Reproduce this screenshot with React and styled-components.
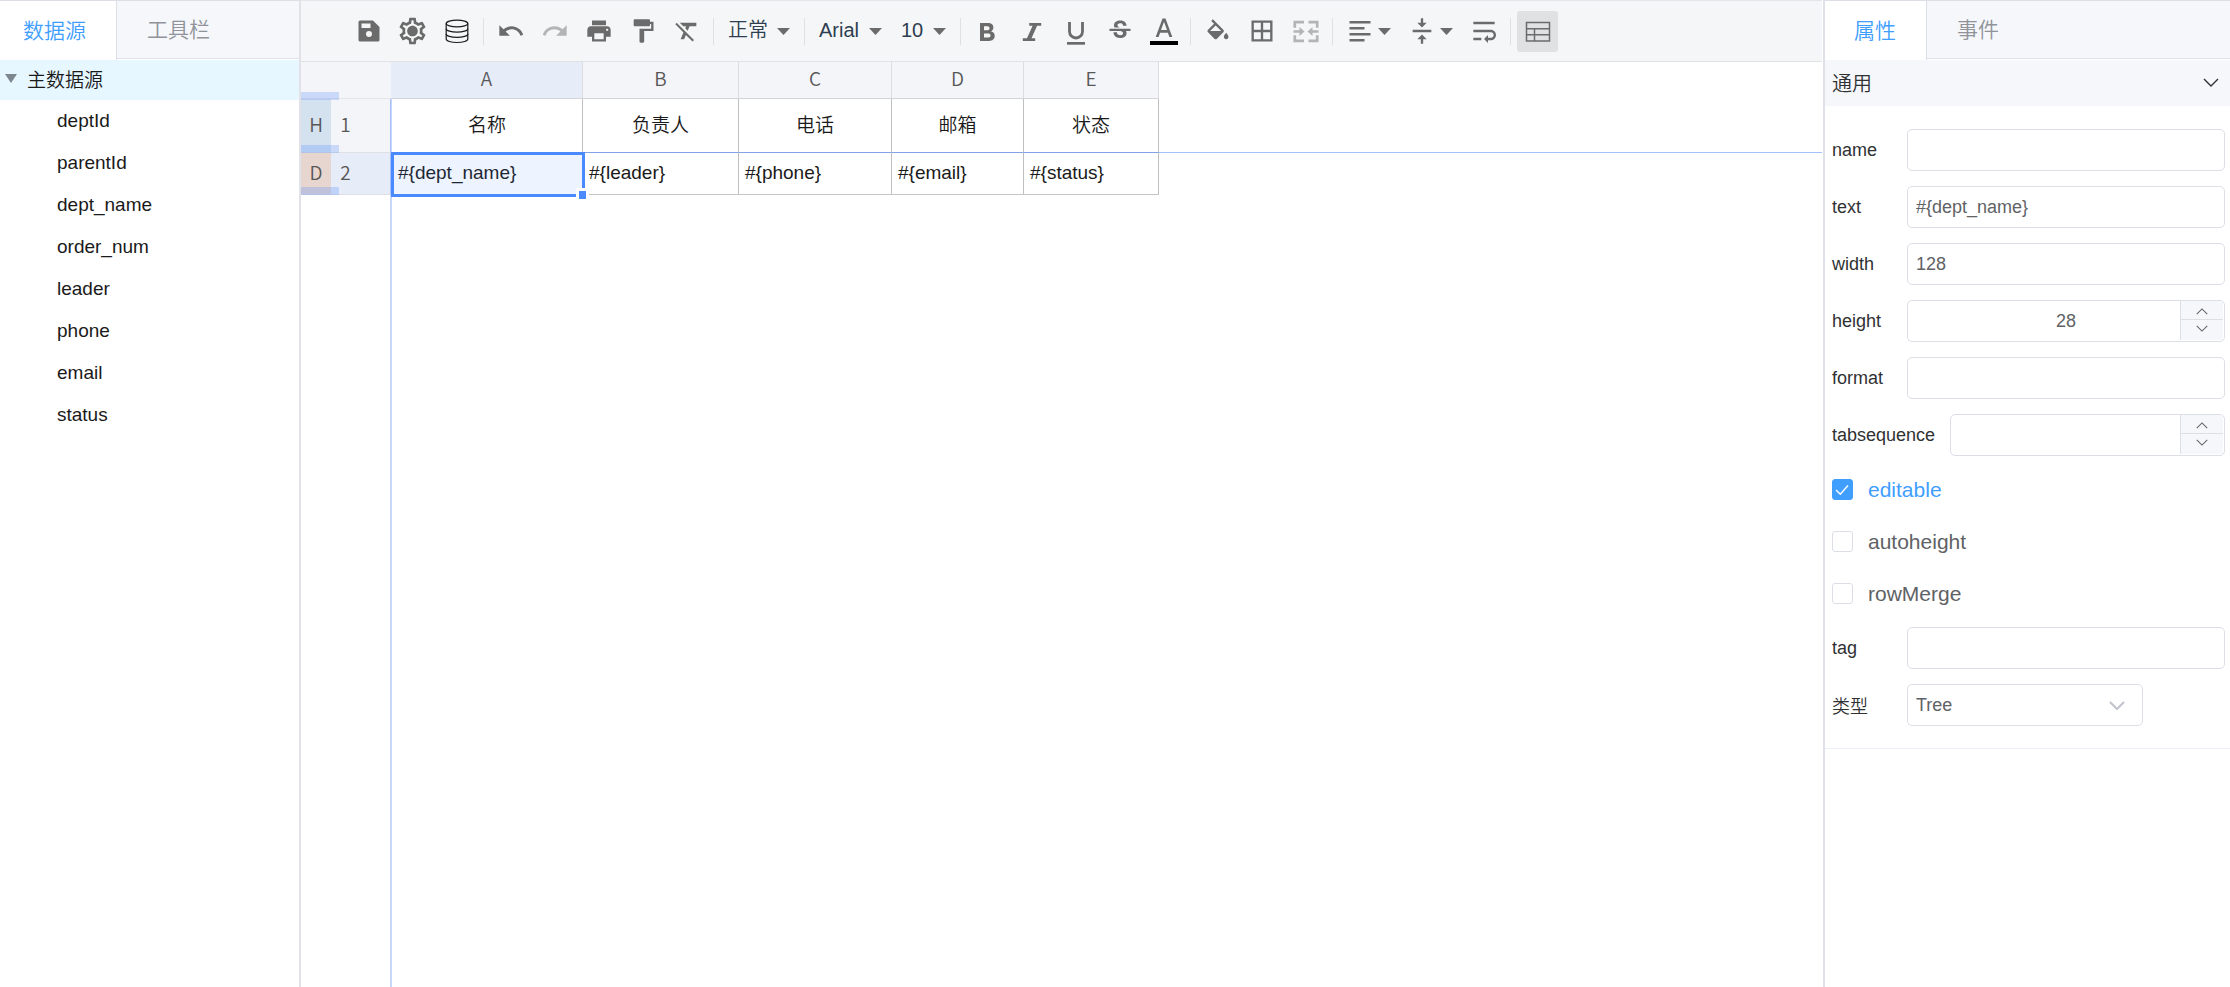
import { useState } from 'react';
import styled, { createGlobalStyle, css } from 'styled-components';
import {
  MdUndo,
  MdRedo,
  MdPrint,
  MdFormatPaint,
  MdFormatClear,
  MdOutlineSettings,
  MdStrikethroughS,
  MdBorderAll,
  MdVerticalAlignCenter,
  MdWrapText,
} from 'react-icons/md';

const FONT = '"Liberation Sans", Arial, "Noto Sans CJK SC", sans-serif';
const HEAD_FONT = '"Noto Sans CJK SC", "Noto Sans", sans-serif';

const GlobalStyle = createGlobalStyle`
  *, *::after {
    box-sizing: border-box;
  }
  body {
    margin: 0;
    background: #fff;
    font-family: ${FONT};
    font-weight: 350;
    font-size: 18px;
    color: #303133;
  }
  button, input, select {
    font: inherit;
    color: inherit;
  }
`;

const Page = styled.div`
  display: flex;
  min-height: 100vh;
`;

/* ---------- side panels ---------- */

const LeftPanel = styled.aside`
  flex: none;
  width: 299px;
`;

const RightPanel = styled.aside`
  flex: none;
  width: 407px;
  border-left: 2px solid #dfe1e8;
`;

const TabBar = styled.div`
  display: flex;
  height: 59px;
  margin-bottom: 1px;
  border-top: 1px solid #dcdfe6;
  border-bottom: 1px solid #dfe2e8;
  background: #f5f7fa;
`;

const Tab = styled.button`
  height: 57px;
  padding: 0 30px;
  padding-left: ${(p) => p.$left || 30}px;
  border: none;
  background: none;
  font-size: 21px;
  line-height: 57px;
  color: #909399;
  ${(p) =>
    p.$active &&
    css`
      height: 59px;
      background: #fff;
      border-right: 1px solid #dcdfe6;
      color: #409eff;
    `}
`;

const Tree = styled.ul`
  margin: 0;
  padding: 0;
  list-style: none;
  font-size: 19px;
  color: #1a1a1a;
`;

const TreeRoot = styled.div`
  display: flex;
  align-items: center;
  gap: 10px;
  height: 40px;
  padding: 0 0 4px 5px;
  background: #e6f7ff;
`;

const TreeItem = styled.li`
  padding-left: 57px;
  line-height: 42px;
`;

/* ---------- toolbar ---------- */

const Editor = styled.main`
  flex: 1;
  min-width: 0;
  display: flex;
  flex-direction: column;
  border-left: 2px solid #e0e2e8;
  padding-right: 1px;
`;

const Toolbar = styled.div`
  display: flex;
  align-items: center;
  gap: 3px;
  height: 62px;
  padding-left: 47px;
  border-top: 1px solid #e4e5e8;
  border-bottom: 1px solid #e0e2e4;
  background: #f5f6f7;
`;

const ToolButton = styled.button`
  display: flex;
  align-items: center;
  justify-content: center;
  flex: none;
  width: ${(p) => (p.$menu ? 59 : 41)}px;
  height: 41px;
  padding: 0;
  gap: 4px;
  border: none;
  border-radius: 3px;
  background: ${(p) => (p.$active ? '#e0e1e3' : 'none')};
  color: #6b6b6b;
  &:disabled {
    color: #b3b4b5;
  }
`;

const Divider = styled.span`
  flex: none;
  width: 1px;
  height: 27px;
  margin: 0 3px;
  background: #dfe0e2;
`;

const ToolSelectWrap = styled.div`
  position: relative;
  flex: none;
  width: ${(p) => p.$width}px;
  color: #6b6b6b;
`;

const ToolSelect = styled.select`
  appearance: none;
  width: 100%;
  height: 41px;
  padding: 0 0 2px 8px;
  border: none;
  background: none;
  font-size: 20px;
  color: #2c3e50;
`;

const ToolSelectCaret = styled.span`
  position: absolute;
  right: 8px;
  top: 0;
  height: 41px;
  display: flex;
  align-items: center;
  pointer-events: none;
`;

/* ---------- sheet ---------- */

const Sheet = styled.table`
  width: 100%;
  table-layout: fixed;
  border-collapse: separate;
  border-spacing: 0;
  font-size: 19px;
  color: #1a1a1a;
  td, th {
    padding: 0;
    font-weight: 350;
  }
`;

const HeadCell = styled.th`
  && {
    padding-bottom: 6px;
  }
  height: 37px;
  border-bottom: 1px solid #d3d4d8;
  border-right: 1px solid #dcdde1;
  background: ${(p) => (p.$active ? '#e6ecf8' : '#f4f5f8')};
  font-family: ${HEAD_FONT};
  color: #585757;
`;

const Corner = styled.th`
  background: #f4f5f8;
  border-bottom: 1px solid #e4e5e8;
`;

const RowBand = styled.th`
  && {
    padding-bottom: 4px;
  }
  position: relative;
  height: ${(p) => p.$height}px;
  border-bottom: 1px solid #d9d5dc;
  background: ${(p) => (p.$band === 'H' ? '#d4e2ef' : '#e7d6d0')};
  font-family: ${HEAD_FONT};
  color: #585757;
`;

const Resizer = styled.i`
  position: absolute;
  z-index: 1;
  left: 0;
  ${(p) => (p.$top ? 'top: -7px' : 'bottom: -1px')};
  width: 38px;
  height: 8px;
  background: rgba(75, 137, 255, 0.25);
`;

const RowNumber = styled.th`
  && {
    padding: 0 30px 4px 0;
  }
  border-bottom: 1px solid #dfe0e4;
  border-right: 1px solid #a6c1f7;
  background: ${(p) => (p.$active ? '#e6ecf8' : '#f4f5f8')};
  font-family: ${HEAD_FONT};
  color: #585757;
`;

const bodyCell = css`
  border-right: 1px solid #bfbfbf;
  /* second half of the freeze line */
  &:nth-child(3) {
    border-left: 1px solid #c5d8fc;
  }
`;

const TitleCell = styled.td`
  && {
    padding-bottom: 4px;
  }
  text-align: center;
  border-bottom: 1px solid #81a3e6;
  ${bodyCell}
`;

const DataCell = styled.td`
  position: relative;
  && {
    padding: 0 0 2px 6px;
  }
  border-bottom: 1px solid #c4c4c4;
  ${bodyCell}
`;

const FreezeTail = styled.td`
  border-bottom: 1px solid #a3c0fb;
`;

const Selection = styled.div`
  position: absolute;
  z-index: 1;
  top: -1px;
  left: -1px;
  right: -3px;
  bottom: -3px;
  border: 3px solid #4b89ff;
  background: rgba(75, 137, 255, 0.1);
  &::after {
    content: '';
    position: absolute;
    right: -7px;
    bottom: -8px;
    width: 13px;
    height: 14px;
    border: 3px solid #fff;
    background: #4b89ff;
  }
`;

const SheetRest = styled.div`
  flex: 1;
  margin-left: 89px;
  border-left: 2px solid #c5d8fc;
`;

/* ---------- properties ---------- */

const SectionHead = styled.button`
  display: flex;
  align-items: center;
  justify-content: space-between;
  width: 100%;
  height: 46px;
  padding: 0 11px 1px 7px;
  border: none;
  background: #f5f7fa;
  font-size: 20px;
  color: #303133;
`;

const Form = styled.form`
  display: flex;
  flex-direction: column;
  gap: 15px;
  padding: 23px 5px 22px 7px;
  border-bottom: 1px solid #ebeef5;
`;

const Field = styled.div`
  display: flex;
  align-items: center;
  gap: 15px;
  height: 42px;
`;

const FieldLabel = styled.label`
  flex: none;
  min-width: 60px;
`;

const Control = styled.div`
  position: relative;
  flex: ${(p) => (p.$width ? 'none' : 1)};
  width: ${(p) => (p.$width ? p.$width + 'px' : 'auto')};
  height: 42px;
  border: 1px solid #dcdfe6;
  border-radius: 5px;
  overflow: hidden;
  color: #606266;
`;

const TextInput = styled.input`
  display: block;
  width: 100%;
  height: 40px;
  padding: 0 8px;
  border: none;
  outline: none;
  background: none;
  text-align: ${(p) => (p.$center ? 'center' : 'left')};
`;

const TypeSelect = styled.select`
  appearance: none;
  display: block;
  width: 100%;
  height: 40px;
  padding: 0 8px;
  border: none;
  background: none;
`;

const SelectArrow = styled.span`
  position: absolute;
  top: 0;
  right: 17px;
  height: 40px;
  display: flex;
  align-items: center;
  color: #c0c4cc;
  pointer-events: none;
`;

const Stepper = styled.div`
  position: absolute;
  top: 0;
  right: 1px;
  bottom: 1px;
  width: 43px;
  display: flex;
  flex-direction: column;
  border-left: 1px solid #dcdfe6;
`;

const StepButton = styled.button`
  flex: 1;
  display: flex;
  align-items: center;
  justify-content: center;
  padding: 2px 0 0;
  border: none;
  background: #f5f7fa;
  color: #606266;
  & + & {
    padding: 0 0 4px;
    border-top: 1px solid #dcdfe6;
  }
`;

const CheckLabel = styled.label`
  display: flex;
  align-items: center;
  gap: 15px;
  height: 37px;
  font-size: 21px;
  color: ${(p) => (p.$checked ? '#409eff' : '#606266')};
`;

const CheckBox = styled.span`
  display: grid;
  width: 21px;
  height: 21px;
  > * {
    grid-area: 1 / 1;
  }
  svg {
    color: #fff;
    pointer-events: none;
  }
`;

const CheckInput = styled.input`
  appearance: none;
  width: 21px;
  height: 21px;
  margin: 0;
  border: 1px solid #dcdfe6;
  border-radius: 3px;
  background: #fff;
  &:checked {
    border-color: #409eff;
    background: #409eff;
  }
`;

/* ---------- icons ---------- */

const Glyph = ({ children, box = '0 0 28 28' }) => (
  <svg width="28" height="28" viewBox={box} fill="currentColor" aria-hidden="true">
    {children}
  </svg>
);

const Caret = () => (
  <svg width="13" height="7" viewBox="0 0 13 7" fill="currentColor" aria-hidden="true">
    <path d="M0 0h13L6.500 7z" />
  </svg>
);

const Chevron = ({ up, width = 16, height = 9, stroke = 1.4 }) => (
  <svg width={width} height={height} viewBox="0 0 16 9" fill="none" stroke="currentColor" strokeWidth={stroke} aria-hidden="true">
    <path d={up ? 'M1 8l7-7 7 7' : 'M1 1l7 7 7-7'} />
  </svg>
);

const SaveIcon = () => (
  <Glyph>
    <path
      fillRule="evenodd"
      d="M5 3.500h13l6.500 6.500V23q0 1.500-1.500 1.500H5q-1.500 0-1.500-1.500V5q0-1.500 1.500-1.500zM6.500 6.500v4.500h9V6.500zM14 14a3 3 0 1 0 0 6 3 3 0 0 0 0-6z"
    />
  </Glyph>
);

const SettingsIcon = () => (
  <svg width="33" height="32" viewBox="0 0 24 24" fill="currentColor" aria-hidden="true">
    <MdOutlineSettings size={24} />
    <circle cx="12" cy="12" r="3.300" />
  </svg>
);

const DatabaseIcon = () => (
  <Glyph>
    <g fill="none" stroke="#1b1b1b" strokeWidth="1.200">
      <ellipse cx="14" cy="6.500" rx="10.800" ry="3.400" />
      <path d="M3.200 6.500v15.600c0 1.900 4.800 3.400 10.800 3.400s10.800-1.500 10.800-3.400V6.500" />
      <path d="M3.200 11.700c0 1.900 4.800 3.400 10.800 3.400s10.800-1.500 10.800-3.400M3.200 16.900c0 1.900 4.800 3.400 10.800 3.400s10.800-1.500 10.800-3.400" />
    </g>
  </Glyph>
);

const BoldIcon = () => (
  <Glyph>
    <path
      fillRule="evenodd"
      d="M6 6h8.400c3 0 5 1.700 5 4.500 0 1.800-.900 3.100-2.400 3.800 2.300.600 3.700 2.200 3.700 4.500 0 3.200-2.300 5.200-5.600 5.200H6zM10 9.200v4h3.600a2 2 0 0 0 0-4zM10 16.400v4.200h4.500a2.100 2.100 0 0 0 0-4.200z"
    />
  </Glyph>
);

const ItalicIcon = () => (
  <Glyph>
    <path d="M11.200 6h12v2.700h-4.100L13.500 21.300h3.700V24H4.800v-2.700h4.200l5.600-12.600h-3.400z" />
  </Glyph>
);

const UnderlineIcon = () => (
  <Glyph>
    <path d="M7.500 5v9.500a6.500 6.500 0 0 0 13 0V5" fill="none" stroke="currentColor" strokeWidth="2.800" />
    <path d="M5 25h18v2.700H5z" />
  </Glyph>
);

const TextColorIcon = () => (
  <Glyph>
    <path fillRule="evenodd" d="M12.500 1.500h3L22.300 20h-2.900l-1.500-4.300h-7.800L8.600 20H5.700zM14 4.700l-3 8.400h6z" />
    <path d="M0 24h28v4H0z" fill="#000" />
  </Glyph>
);

const FillIcon = () => (
  <Glyph box="0 -2 24 24">
    <path d="M16.560 8.940L7.620 0 6.210 1.410l2.380 2.380-5.150 5.150c-.590.590-.590 1.540 0 2.120l5.500 5.500c.290.290.680.440 1.060.440s.770-.150 1.060-.440l5.500-5.500c.590-.580.590-1.530 0-2.120zM5.210 10L10 5.210 14.790 10H5.210zM19 11.500s-2 2.170-2 3.500c0 1.100.900 2 2 2s2-.900 2-2c0-1.330-2-3.500-2-3.500z" />
  </Glyph>
);

const MergeIcon = () => (
  <Glyph>
    <g fill="none" stroke="currentColor" strokeWidth="2.700">
      <path d="M12 5.200H2.800v5.600M16.500 5.200h8.700v5.600M12 23.800H2.800v-5.600M16.500 23.800h8.700v-5.600M1.500 14.500h7M19.500 14.500h7" />
    </g>
    <path d="M7.500 10l5 4.500-5 4.500zM20.500 10l-5 4.500 5 4.500z" />
  </Glyph>
);

const AlignIcon = () => (
  <Glyph>
    <path d="M3.500 4h21v2.600h-21zM3.500 10h15v2.600h-15zM3.500 16h21v2.600h-21zM3.500 22h15v2.600h-15z" />
  </Glyph>
);

const TableIcon = () => (
  <Glyph>
    <path d="M2.500 5.500h23v18.500h-23zM2.500 11.700h23M2.500 17.800h23M10.500 11.700V24" fill="none" stroke="currentColor" strokeWidth="1.500" />
  </Glyph>
);

/* ---------- data ---------- */

const fields = ['deptId', 'parentId', 'dept_name', 'order_num', 'leader', 'phone', 'email', 'status'];

const columns = [
  { key: 'A', width: 192, title: '名称', value: '#{dept_name}' },
  { key: 'B', width: 156, title: '负责人', value: '#{leader}' },
  { key: 'C', width: 153, title: '电话', value: '#{phone}' },
  { key: 'D', width: 132, title: '邮箱', value: '#{email}' },
  { key: 'E', width: 135, title: '状态', value: '#{status}' },
];

const ToolMenu = ({ label, width, options }) => (
  <ToolSelectWrap $width={width}>
    <ToolSelect aria-label={label}>
      {options.map((it) => (
        <option key={it}>{it}</option>
      ))}
    </ToolSelect>
    <ToolSelectCaret>
      <Caret />
    </ToolSelectCaret>
  </ToolSelectWrap>
);

const TextField = ({ name, value = '' }) => (
  <Field>
    <FieldLabel htmlFor={name}>{name}</FieldLabel>
    <Control>
      <TextInput id={name} defaultValue={value} />
    </Control>
  </Field>
);

const NumberField = ({ name, initial = '' }) => {
  const [value, setValue] = useState(initial);
  const step = (n) => setValue(String(Number(value) + n));

  return (
    <Field>
      <FieldLabel htmlFor={name}>{name}</FieldLabel>
      <Control>
        <TextInput id={name} $center inputMode="numeric" value={value} onChange={(e) => setValue(e.target.value)} />
        <Stepper>
          <StepButton type="button" aria-label={name + ' +'} onClick={() => step(1)}>
            <Chevron up width={12} height={7} />
          </StepButton>
          <StepButton type="button" aria-label={name + ' -'} onClick={() => step(-1)}>
            <Chevron width={12} height={7} />
          </StepButton>
        </Stepper>
      </Control>
    </Field>
  );
};

const CheckField = ({ name, initial = false }) => {
  const [checked, setChecked] = useState(initial);

  return (
    <CheckLabel $checked={checked}>
      <CheckBox>
        <CheckInput type="checkbox" checked={checked} onChange={(e) => setChecked(e.target.checked)} />
        {checked && (
          <svg width="21" height="21" viewBox="0 0 21 21" fill="none" stroke="currentColor" strokeWidth="1.400" aria-hidden="true">
            <path d="M4 11l4.300 4.300L16 6.500" />
          </svg>
        )}
      </CheckBox>
      {name}
    </CheckLabel>
  );
};

const App = () => {
  return (
    <Page>
      <GlobalStyle />
      <LeftPanel>
        <TabBar>
          <Tab $active $left={23}>数据源</Tab>
          <Tab>工具栏</Tab>
        </TabBar>
        <Tree>
          <li>
            <TreeRoot>
              <svg width="12" height="9" viewBox="0 0 12 9" fill="#7d878d" aria-hidden="true">
                <path d="M0 0h12L6 9z" />
              </svg>
              主数据源
            </TreeRoot>
          </li>
          {fields.map((it) => (
            <TreeItem key={it}>{it}</TreeItem>
          ))}
        </Tree>
      </LeftPanel>

      <Editor>
        <Toolbar>
          <ToolButton aria-label="save"><SaveIcon /></ToolButton>
          <ToolButton aria-label="settings"><SettingsIcon /></ToolButton>
          <ToolButton aria-label="datasource"><DatabaseIcon /></ToolButton>
          <Divider />
          <ToolButton aria-label="undo"><MdUndo size={28} /></ToolButton>
          <ToolButton aria-label="redo" disabled><MdRedo size={28} /></ToolButton>
          <ToolButton aria-label="print"><MdPrint size={28} /></ToolButton>
          <ToolButton aria-label="paint format"><MdFormatPaint size={28} /></ToolButton>
          <ToolButton aria-label="clear format"><MdFormatClear size={28} /></ToolButton>
          <Divider />
          <ToolMenu label="format" width={78} options={['正常']} />
          <Divider />
          <ToolMenu label="font" width={79} options={['Arial']} />
          <ToolMenu label="font size" width={61} options={['10']} />
          <Divider />
          <ToolButton aria-label="bold"><BoldIcon /></ToolButton>
          <ToolButton aria-label="italic"><ItalicIcon /></ToolButton>
          <ToolButton aria-label="underline"><UnderlineIcon /></ToolButton>
          <ToolButton aria-label="strike"><MdStrikethroughS size={28} /></ToolButton>
          <ToolButton aria-label="text color"><TextColorIcon /></ToolButton>
          <Divider />
          <ToolButton aria-label="fill color"><FillIcon /></ToolButton>
          <ToolButton aria-label="borders"><MdBorderAll size={28} /></ToolButton>
          <ToolButton aria-label="merge cells" disabled><MergeIcon /></ToolButton>
          <Divider />
          <ToolButton aria-label="align" $menu><AlignIcon /><Caret /></ToolButton>
          <ToolButton aria-label="vertical align" $menu><MdVerticalAlignCenter size={28} /><Caret /></ToolButton>
          <ToolButton aria-label="wrap text"><MdWrapText size={32} /></ToolButton>
          <Divider />
          <ToolButton aria-label="table" $active><TableIcon /></ToolButton>
        </Toolbar>

        <Sheet>
          <colgroup>
            <col width="30" />
            <col width="60" />
            {columns.map((it) => (
              <col key={it.key} width={it.width} />
            ))}
            <col />
          </colgroup>
          <thead>
            <tr>
              <Corner colSpan={2} />
              {columns.map((it) => (
                <HeadCell key={it.key} $active={it.key === 'A'}>{it.key}</HeadCell>
              ))}
              <td />
            </tr>
          </thead>
          <tbody>
            <tr>
              <RowBand $band="H" $height={54}>
                H
                <Resizer $top />
                <Resizer />
              </RowBand>
              <RowNumber>1</RowNumber>
              {columns.map((it) => (
                <TitleCell key={it.key}>{it.title}</TitleCell>
              ))}
              <FreezeTail />
            </tr>
            <tr>
              <RowBand $band="D" $height={42}>
                D
                <Resizer />
              </RowBand>
              <RowNumber $active>2</RowNumber>
              {columns.map((it) => (
                <DataCell key={it.key}>
                  {it.value}
                  {it.key === 'A' && <Selection />}
                </DataCell>
              ))}
              <td />
            </tr>
          </tbody>
        </Sheet>
        <SheetRest />
      </Editor>

      <RightPanel>
        <TabBar>
          <Tab $active $left={29}>属性</Tab>
          <Tab>事件</Tab>
        </TabBar>
        <SectionHead>
          通用
          <Chevron />
        </SectionHead>
        <Form>
          <TextField name="name" />
          <TextField name="text" value="#{dept_name}" />
          <TextField name="width" value="128" />
          <NumberField name="height" initial="28" />
          <TextField name="format" />
          <NumberField name="tabsequence" />
          <CheckField name="editable" initial />
          <CheckField name="autoheight" />
          <CheckField name="rowMerge" />
          <TextField name="tag" />
          <Field>
            <FieldLabel htmlFor="type">类型</FieldLabel>
            <Control $width={236}>
              <TypeSelect id="type">
                <option>Tree</option>
              </TypeSelect>
              <SelectArrow>
                <Chevron stroke={2} />
              </SelectArrow>
            </Control>
          </Field>
        </Form>
      </RightPanel>
    </Page>
  );
};

export default App;
